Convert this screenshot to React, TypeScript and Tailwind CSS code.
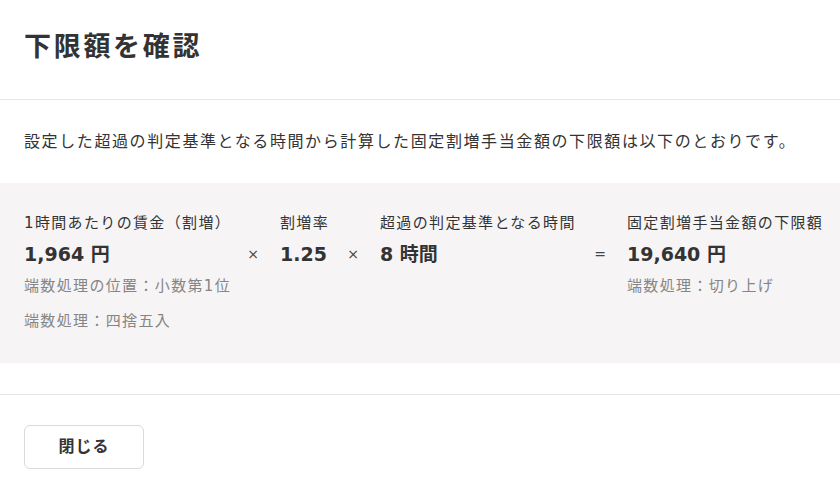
const font = {
  fontFamily: '"DejaVu Sans", "Noto Sans CJK JP", sans-serif',
};

function Column({
  label,
  value,
  notes = [],
  width,
}: {
  label: string;
  value: string;
  notes?: string[];
  width: string;
}) {
  return (
    <div className={`${width} shrink-0`}>
      <div className="text-[15px] leading-[22px] tracking-[0.09em] text-[#333]">
        {label}
      </div>
      <div className="mt-[5px] text-[19px] leading-[30px] font-bold text-[#333]">
        {value}
      </div>
      {notes.map((n, i) => (
        <div
          key={n}
          className={`${i === 0 ? "mt-[6px]" : "mt-[13px]"} text-[15px] leading-[22px] tracking-[0.09em] text-[#858585]`}
        >
          {n}
        </div>
      ))}
    </div>
  );
}

function Operator({ sign }: { sign: string }) {
  return (
    <div className="w-[26px] mr-[14px] shrink-0 mt-[27px] text-center text-[14px] leading-[30px] text-[#444]">
      {sign}
    </div>
  );
}

export default function App() {
  return (
    <div className="w-[840px] h-[490px] bg-white text-[#333]" style={font}>
      <div className="h-[100px] flex items-center px-6 border-b border-[#e6e6e6]">
        <h1 className="text-[27px] font-bold tracking-[0.1em] text-[#333] -mt-[4px]">
          下限額を確認
        </h1>
      </div>

      <p className="px-6 py-[30px] text-[16px] leading-[23px] tracking-[0.1em]">
        設定した超過の判定基準となる時間から計算した固定割増手当金額の下限額は以下のとおりです。
      </p>

      <div className="h-[180px] bg-[#f6f4f5] px-6 pt-[29px] flex">
        <Column
          width="w-[216px]"
          label="1時間あたりの賃金（割増）"
          value="1,964 円"
          notes={["端数処理の位置：小数第1位", "端数処理：四捨五入"]}
        />
        <Operator sign="×" />
        <Column width="w-[60px]" label="割増率" value="1.25" />
        <Operator sign="×" />
        <Column width="w-[207px]" label="超過の判定基準となる時間" value="8 時間" />
        <Operator sign="=" />
        <Column
          width="w-[200px]"
          label="固定割増手当金額の下限額"
          value="19,640 円"
          notes={["端数処理：切り上げ"]}
        />
      </div>

      <div className="mt-[31px] border-t border-[#e6e6e6] px-6 pt-[30px]">
        <button className="w-[120px] h-[44px] rounded-[6px] border border-[#d9d9d9] bg-white text-[16px] font-bold tracking-[0.06em] text-[#333]">
          閉じる
        </button>
      </div>
    </div>
  );
}
